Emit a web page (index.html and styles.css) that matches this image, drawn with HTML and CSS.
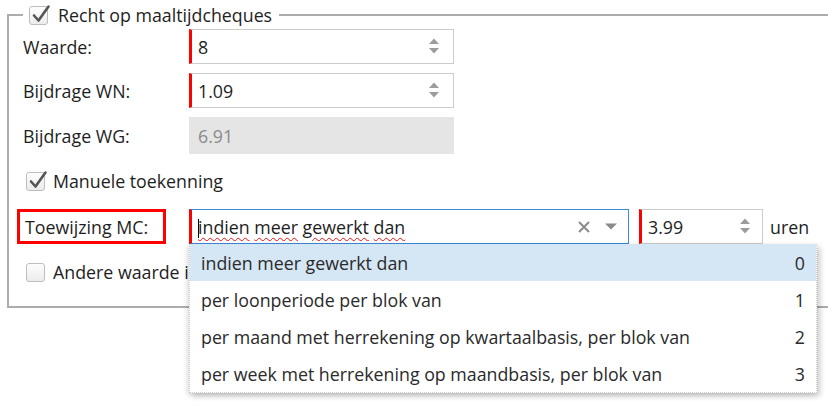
FILE: index.html
```html
<!DOCTYPE html>
<html lang="nl">
<head>
<meta charset="utf-8">
<title>Maaltijdcheques</title>
<link rel="stylesheet" href="styles.css">
</head>
<body>
<fieldset class="group">
  <legend class="group-legend">
    <span class="check"><svg class="tick" viewBox="0 0 20 20" width="20" height="20"><path d="M4 10.5 L8.5 15.5 L18.5 1.5" fill="none" stroke="#555" stroke-width="2.6" stroke-linecap="round" stroke-linejoin="round"/></svg></span>
    <span class="legend-text">Recht op maaltijdcheques</span>
  </legend>

  <div class="row r-input">
    <span class="lbl">Waarde:</span>
    <div class="field w-main"><span class="val">8</span><svg class="spin" viewBox="0 0 12 16" width="12" height="16"><polygon points="1,6 6,0.5 11,6" /><polygon points="1,10 6,15.5 11,10" /></svg></div>
  </div>

  <div class="row r-input">
    <span class="lbl">Bijdrage WN:</span>
    <div class="field w-main"><span class="val">1.09</span><svg class="spin" viewBox="0 0 12 16" width="12" height="16"><polygon points="1,6 6,0.5 11,6" /><polygon points="1,10 6,15.5 11,10" /></svg></div>
  </div>

  <div class="row r-disabled">
    <span class="lbl">Bijdrage WG:</span>
    <div class="field disabled w-main"><span class="val">6.91</span></div>
  </div>

  <div class="row r-check">
    <span class="check"><svg class="tick" viewBox="0 0 20 20" width="20" height="20"><path d="M4 10.5 L8.5 15.5 L18.5 1.5" fill="none" stroke="#555" stroke-width="2.6" stroke-linecap="round" stroke-linejoin="round"/></svg></span>
    <span class="check-text">Manuele toekenning</span>
  </div>

  <div class="row r-assign">
    <span class="lbl"><span class="marked">Toewijzing MC:</span></span>
    <div class="combo-wrap">
      <div class="field combo">
        <span class="val"><span class="caret"></span><span class="typo">indien</span> <span class="typo">meer</span> <span class="typo">gewerkt</span> <span class="typo">dan</span></span>
        <svg class="clear" viewBox="0 0 14 14" width="14" height="14"><path d="M2 2 L12 12 M12 2 L2 12" stroke="#8a8a8a" stroke-width="2" fill="none"/></svg>
        <svg class="drop" viewBox="0 0 12 7" width="12" height="7"><polygon points="0,0.5 12,0.5 6,6.5" fill="#8a8a8a"/></svg>
      </div>
      <ul class="menu">
        <li class="menu-item active"><span>indien meer gewerkt dan</span><span>0</span></li>
        <li class="menu-item"><span>per loonperiode per blok van</span><span>1</span></li>
        <li class="menu-item"><span>per maand met herrekening op kwartaalbasis, per blok van</span><span>2</span></li>
        <li class="menu-item"><span>per week met herrekening op maandbasis, per blok van</span><span>3</span></li>
      </ul>
    </div>
    <div class="field w-hours"><span class="val">3.99</span><svg class="spin" viewBox="0 0 12 16" width="12" height="16"><polygon points="1,6 6,0.5 11,6" /><polygon points="1,10 6,15.5 11,10" /></svg></div>
    <span class="unit">uren</span>
  </div>

  <div class="row r-check2">
    <span class="check"></span>
    <span class="check-text">Andere waarde in</span>
  </div>
</fieldset>
</body>
</html>
```

FILE: styles.css
```css
* { box-sizing: border-box; }

html, body {
  margin: 0;
  padding: 0;
  background: #ffffff;
  overflow: hidden;
}

body {
  width: 828px;
  height: 405px;
  font-family: "Open Sans", "Noto Sans", sans-serif;
  font-size: 17.8px;
  color: #1e1e1e;
}

.group {
  margin: 5px 0 0 7px;
  width: 840px;
  min-width: 0;
  border: 2px solid #adadad;
  padding: 4px 0 15px 14px;
}

.group-legend {
  display: flex;
  align-items: center;
  height: 20px;
  padding: 0 7px 0 6px;
}

.legend-text { margin-left: 2px; }

.check {
  position: relative;
  flex: none;
  width: 19px;
  height: 19px;
  border: 1px solid #bdbdbd;
  border-radius: 3px;
  background: linear-gradient(#fdfdfd, #ececec);
  margin-right: 8px;
}

.tick {
  position: absolute;
  left: 0;
  top: -2px;
  overflow: visible;
}

.row {
  display: flex;
  align-items: center;
}

.r-input { height: 35px; margin-bottom: 9px; }
.r-disabled { height: 37px; margin-bottom: 9px; }
.r-check { height: 36px; margin-bottom: 10px; padding-left: 3px; }
.r-assign { height: 35px; margin-bottom: 9px; }
.r-check2 { height: 38px; padding-left: 3px; }

.lbl {
  flex: none;
  width: 166px;
  white-space: nowrap;
}

.field {
  display: flex;
  align-items: center;
  height: 100%;
  border: 1px solid #cccccc;
  border-left: 3px solid #ff0000;
  padding: 0 13px 0 6px;
  background: #ffffff;
}

.field .val {
  flex: 1;
  white-space: nowrap;
}

.w-main { width: 265px; }

.spin {
  flex: none;
  fill: #9c9c9c;
  margin-top: -2px;
}

.disabled {
  background: #e5e5e5;
  border: 1px solid #e5e5e5;
  color: #8a8a8a;
  padding-left: 8px;
}

.marked {
  display: flex;
  align-items: center;
  width: 149px;
  height: 35px;
  margin-left: -6px;
  padding-left: 5px;
  border: 3px solid #ff0000;
}

.combo-wrap {
  position: relative;
  height: 100%;
  width: 440px;
  flex: none;
}

.combo {
  border: 1px solid #3d8ad6;
  border-left: 3px solid #ff0000;
  padding: 0 11px 0 6px;
}

.caret {
  display: inline-block;
  width: 0;
  height: 19px;
  border-left: 1px solid #000;
  vertical-align: -4px;
  margin-right: -1px;
}

.typo {
  text-decoration: underline wavy #e81010;
  text-decoration-thickness: 1px;
  text-underline-offset: 3px;
}

.clear { flex: none; margin-right: 14px; }
.drop { flex: none; }

.menu {
  position: absolute;
  top: 100%;
  left: 0;
  width: 628px;
  margin: 0;
  padding: 0;
  list-style: none;
  background: #ffffff;
  border: 1px dotted #cfcfcf;
  border-top: none;
  box-shadow: 3px 3px 6px rgba(0, 0, 0, 0.2), -2px 2px 5px rgba(0, 0, 0, 0.12);
  z-index: 2;
  color: #2a2a2a;
}

.menu-item {
  display: flex;
  justify-content: space-between;
  align-items: center;
  height: 37px;
  padding: 0 11px 0 11px;
}

.menu-item.active { background: #d5e6f5; }

.w-hours {
  width: 124px;
  margin-left: 10px;
  padding-right: 11px;
}

.unit { margin-left: 7px; }
```
